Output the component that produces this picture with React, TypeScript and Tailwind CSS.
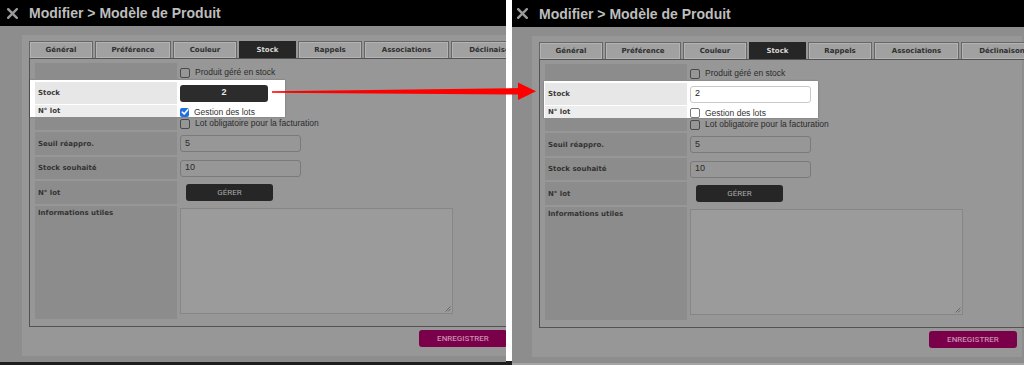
import React from "react";

type Variant = "before" | "after";

const TABS: { label: string; w: string; active?: boolean }[] = [
  { label: "Général", w: "w-[64px]" },
  { label: "Préférence", w: "w-[76px]" },
  { label: "Couleur", w: "w-[64px]" },
  { label: "Stock", w: "w-[57px]", active: true },
  { label: "Rappels", w: "w-[64px]" },
  { label: "Associations", w: "w-[85px]" },
  { label: "Déclinaisons", w: "w-[86px]" },
];

function Box({ checked, light }: { checked?: boolean; light?: boolean }) {
  if (checked) {
    return (
      <span className="flex h-[9px] w-[9px] shrink-0 items-center justify-center rounded-[2px] bg-[#1f6fe0]">
        <svg width="8" height="8" viewBox="0 0 8 8">
          <path d="M1.3 4.2 L3.2 6 L6.8 1.8" fill="none" stroke="#fff" strokeWidth="1.6" strokeLinecap="round" strokeLinejoin="round" />
        </svg>
      </span>
    );
  }
  return (
    <span
      className={
        light
          ? "h-[10px] w-[10px] shrink-0 rounded-[2px] border border-[#7a7a7a] bg-white"
          : "h-[10px] w-[10px] shrink-0 rounded-[2px] border border-[#4a4a4a] bg-[#969696]"
      }
    />
  );
}

const labelTxt = "font-['DejaVu_Sans',Verdana,sans-serif] text-[7px] font-bold leading-none";
const cbTxt = "font-['Liberation_Sans',Arial,sans-serif] text-[8.5px] leading-none";

function Panel({ variant }: { variant: Variant }) {
  const after = variant === "after";
  return (
    <div className={after ? "h-[365px] w-[512px] shrink-0 overflow-hidden" : "h-[365px] w-[506px] shrink-0 overflow-hidden"}>
      <div className={after ? "-ml-[2px] flex w-[514px] flex-col" : "flex w-[514px] flex-col"}>
        {/* header */}
        <div className={after ? "flex h-[27px] items-center bg-black pl-[7px]" : "flex h-[26px] items-center bg-black pl-[7px]"}>
          <svg width="11" height="11" viewBox="0 0 11 11" className="shrink-0">
            <path d="M1.2 1.2 L9.8 9.8 M9.8 1.2 L1.2 9.8" stroke="#9b9b9b" strokeWidth="2.4" strokeLinecap="square" />
          </svg>
          <span className="ml-[11px] font-['Liberation_Sans',Arial,sans-serif] text-[14px] font-bold leading-none text-[#bdbdbd]">
            Modifier &gt; Modèle de Produit
          </span>
        </div>
        {/* body */}
        <div className="bg-[#8d8d8d] pb-[6px] pl-[22px] pr-[2px] pt-[9px]">
          <div className="flex h-[321px] flex-col bg-[#979797] pl-[7px] pr-[5px] pt-[6px]">
            {/* tabs */}
            <div className="flex h-[17px] gap-[2px]">
              {TABS.map((t) => (
                <div
                  key={t.label}
                  className={
                    (t.active
                      ? "border-[#262626] bg-[#262626] text-[#d6d6d6]"
                      : "border-[#666] bg-[#a1a1a1] text-[#2e2e2e] shadow-[inset_0_0_0_1px_#b3b3b3]") +
                    " flex shrink-0 items-center justify-center overflow-hidden whitespace-nowrap border border-b-0 " +
                    t.w +
                    " " +
                    labelTxt
                  }
                >
                  {t.label}
                </div>
              ))}
            </div>
            {/* frame */}
            <div className="w-[500px] border border-r-0 border-[#535353] pb-[7px] pl-[5px] pt-[4px]">
              {/* row 1 */}
              <div className="flex h-[17px]">
                <div className="w-[142px] shrink-0 bg-[#8c8c8c]" />
                <div className="flex items-center gap-[5px] pl-[3px] pt-[2px]">
                  <Box />
                  <span className={cbTxt + " text-[#2b2b2b]"}>Produit géré en stock</span>
                </div>
              </div>
              {/* highlight */}
              <div
                className={
                  after
                    ? "-ml-[1px] w-[274px] bg-white pl-[1px] pt-[2px] shadow-[0_0_2px_rgba(0,0,0,0.25)]"
                    : "-ml-[5px] w-[255px] bg-white pl-[5px] pt-[2px] shadow-[0_0_2px_rgba(0,0,0,0.25)]"
                }
              >
                <div className="flex h-[22px]">
                  <div className={"flex w-[142px] shrink-0 items-center bg-[#e7e7e7] pl-[3px] text-[#3a3a3a] " + labelTxt}>Stock</div>
                  <div className="flex items-center pl-[3px]">
                    {after ? (
                      <div className="flex h-[17px] w-[121px] items-center rounded-[3px] border border-[#c9c9c9] bg-white pl-[4px] font-['Liberation_Sans',Arial,sans-serif] text-[9px] text-[#222]">
                        2
                      </div>
                    ) : (
                      <div className="flex h-[17px] w-[88px] items-center justify-center rounded-[3px] bg-[#2c2c2c] font-['Liberation_Sans',Arial,sans-serif] text-[9px] font-bold text-[#e8e8e8]">
                        2
                      </div>
                    )}
                  </div>
                </div>
                <div className="mt-[1px] flex h-[12px]">
                  <div className={"flex w-[142px] shrink-0 items-center bg-[#ededed] pl-[3px] text-[#3a3a3a] " + labelTxt}>N° lot</div>
                  <div className="flex items-center gap-[5px] pl-[3px] pt-[2px]">
                    <Box checked={!after} light />
                    <span className={cbTxt + " text-[#333]"}>Gestion des lots</span>
                  </div>
                </div>
              </div>
              {/* row 3b */}
              <div className="flex h-[13px]">
                <div className="w-[142px] shrink-0 bg-[#8c8c8c]" />
                <div className="flex items-center gap-[5px] pl-[3px]">
                  <Box />
                  <span className={cbTxt + " text-[#2b2b2b]"}>Lot obligatoire pour la facturation</span>
                </div>
              </div>
              {/* seuil */}
              <div className="mt-[2px] flex h-[23px]">
                <div className={"flex w-[142px] shrink-0 items-center bg-[#8c8c8c] pl-[3px] pt-[2px] text-[#333] " + labelTxt}>Seuil réappro.</div>
                <div className="flex items-center pl-[3px]">
                  <div className="flex h-[17px] w-[121px] items-center rounded-[3px] border border-[#7a7a7a] bg-[#979797] pl-[4px] font-['Liberation_Sans',Arial,sans-serif] text-[9px] text-[#2a2a2a]">
                    5
                  </div>
                </div>
              </div>
              {/* souhaité */}
              <div className="mt-[2px] flex h-[22px]">
                <div className={"flex w-[142px] shrink-0 items-center bg-[#8c8c8c] pl-[3px] pt-[1px] text-[#333] " + labelTxt}>Stock souhaité</div>
                <div className="flex items-center pl-[3px]">
                  <div className="flex h-[17px] w-[121px] items-center rounded-[3px] border border-[#7a7a7a] bg-[#979797] pl-[4px] font-['Liberation_Sans',Arial,sans-serif] text-[9px] text-[#2a2a2a]">
                    10
                  </div>
                </div>
              </div>
              {/* gérer */}
              <div className="mt-[2px] flex h-[23px]">
                <div className={"flex w-[142px] shrink-0 items-center bg-[#8c8c8c] pl-[3px] pt-[2px] text-[#333] " + labelTxt}>N° lot</div>
                <div className="flex items-center pl-[9px]">
                  <div className="flex h-[17px] w-[87px] items-center justify-center rounded-[3px] bg-[#262626] font-['Roboto',sans-serif] text-[8px] text-[#a9a9a9]">
                    GÉRER
                  </div>
                </div>
              </div>
              {/* infos */}
              <div className="mt-[2px] flex h-[113px]">
                <div className={"w-[142px] shrink-0 bg-[#8c8c8c] pl-[3px] pt-[4px] text-[#333] " + labelTxt}>Informations utiles</div>
                <div className="pl-[3px] pt-[2px]">
                  <div className="relative h-[106px] w-[273px] border border-[#868686] bg-[#9b9b9b]">
                    <svg width="6" height="6" viewBox="0 0 6 6" className="absolute bottom-[1px] right-[1px]">
                      <path d="M5.5 0.5 L0.5 5.5 M5.5 3 L3 5.5" stroke="#5a5a5a" strokeWidth="0.8" />
                    </svg>
                  </div>
                </div>
              </div>
            </div>
            {/* save */}
            <div className="flex justify-end pt-[3px]">
              <div className="flex h-[17px] w-[88px] items-center justify-center rounded-[3px] bg-[#7a0049] font-['Roboto',sans-serif] text-[8px] font-medium text-[#c98db0]">
                ENREGISTRER
              </div>
            </div>
          </div>
        </div>
        <div className={after ? "h-[4px] bg-[#a4a4a4]" : "h-[4px] bg-[#1e1e1e]"} />
      </div>
    </div>
  );
}

export default function App() {
  return (
    <div className="relative h-[365px] w-[1024px] overflow-hidden bg-[#1e1e1e]">
      <div className="flex">
        <Panel variant="before" />
        <div className="flex w-[6px] shrink-0 flex-col">
          <div className="h-[361px] bg-white" />
          <div className="h-[4px] bg-[#1e1e1e]" />
        </div>
        <Panel variant="after" />
      </div>
      <svg className="pointer-events-none absolute left-0 top-0" width="1024" height="365" viewBox="0 0 1024 365">
        <polygon points="272,91.3 520,88 520,94.5 272,92.8" fill="#ff0000" />
        <polygon points="518,82.5 536,91.3 518,100" fill="#ff0000" />
      </svg>
    </div>
  );
}
